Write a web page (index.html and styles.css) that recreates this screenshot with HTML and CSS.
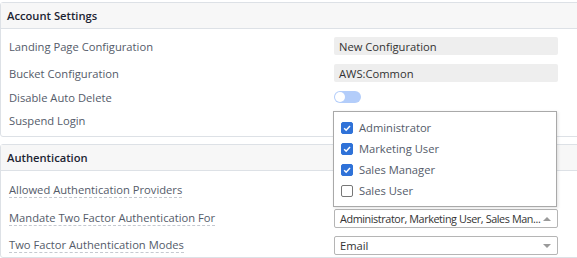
FILE: index.html
```html
<!DOCTYPE html>
<html>
<head>
<meta charset="utf-8">
<link rel="stylesheet" href="styles.css">
</head>
<body>
<div class="page">
  <section class="panel panel-account">
    <div class="panel-head">Account Settings</div>
    <div class="panel-body">
      <div class="row r1"><span class="label">Landing Page Configuration</span><div class="field ro">New Configuration</div></div>
      <div class="row r2"><span class="label">Bucket Configuration</span><div class="field ro">AWS:Common</div></div>
      <div class="row r3"><span class="label">Disable Auto Delete</span><div class="field-wrap"><span class="toggle"><span class="knob"></span></span></div></div>
      <div class="row r4"><span class="label">Suspend Login</span><div class="field-wrap"></div></div>
    </div>
  </section>
  <section class="panel panel-auth">
    <div class="panel-head">Authentication</div>
    <div class="panel-body">
      <div class="row a1"><span class="label dotted">Allowed Authentication Providers</span><div class="field-wrap"></div></div>
      <div class="row a2"><span class="label dotted">Mandate Two Factor Authentication For</span>
        <div class="field select"><span class="sel-text tight">Administrator, Marketing User, Sales Man...</span><span class="caret up"></span></div>
      </div>
      <div class="row a3"><span class="label dotted">Two Factor Authentication Modes</span>
        <div class="field select"><span class="sel-text">Email</span><span class="caret down"></span></div>
      </div>
    </div>
  </section>
  <div class="dropdown">
    <label class="opt"><span class="cb on"><svg viewBox="0 0 12 12"><path d="M2.6 6.2 L5 8.6 L9.6 3.6" fill="none" stroke="#fff" stroke-width="1.8"/></svg></span>Administrator</label>
    <label class="opt"><span class="cb on"><svg viewBox="0 0 12 12"><path d="M2.6 6.2 L5 8.6 L9.6 3.6" fill="none" stroke="#fff" stroke-width="1.8"/></svg></span>Marketing User</label>
    <label class="opt"><span class="cb on"><svg viewBox="0 0 12 12"><path d="M2.6 6.2 L5 8.6 L9.6 3.6" fill="none" stroke="#fff" stroke-width="1.8"/></svg></span>Sales Manager</label>
    <label class="opt"><span class="cb"></span>Sales User</label>
  </div>
</div>
</body>
</html>
```

FILE: styles.css
```css
* { box-sizing: border-box; }
html, body { margin: 0; padding: 0; background: #fff; }
body {
  font-family: "Open Sans", "Noto Sans", sans-serif;
  font-size: 11.2px;
  color: #545b69;
  overflow: hidden;
}
.page {
  position: relative;
  width: 577px;
  height: 258px;
  padding-top: 2px;
  overflow: hidden;
}
.panel {
  width: 600px;
  border: 1px solid #dde1e6;
  border-radius: 3px;
  background: #fff;
}
.panel-account { height: 135px; }
.panel-auth { margin-top: 7px; height: 114px; }
.panel-head {
  height: 26px;
  background: #f7f7f7;
  border-bottom: 1px solid #dde1e6;
  padding: 0 6px;
  font-size: 11.2px;
  font-weight: 600;
  color: #1d2433;
  display: flex;
  align-items: center;
}
.panel-body { padding-left: 8px; }
.row {
  display: flex;
  align-items: center;
  justify-content: space-between;
  width: 549px;
}
.label { white-space: nowrap; }
.dotted { border-bottom: 1px dashed #c5c9d0; line-height: 14px; }
.field, .field-wrap { width: 224px; flex: none; }
.r1 { margin-top: 8px; height: 18px; }
.r2 { margin-top: 9px; height: 18px; }
.r3 { margin-top: 7px; height: 16px; }
.r4 { margin-top: 7px; height: 16px; }
.a1 { margin-top: 10px; height: 18px; }
.a2 { margin-top: 10px; height: 19px; }
.a3 { margin-top: 8px; height: 19px; }
.field.ro {
  height: 18px;
  background: #eeeeee;
  border-radius: 2px;
  padding-left: 5px;
  display: flex;
  align-items: center;
  color: #333;
}
.toggle {
  display: block;
  width: 27px;
  height: 12px;
  border-radius: 6px;
  background: #b3cdfa;
  position: relative;
}
.knob {
  position: absolute;
  left: 1px; top: 1px;
  width: 10px; height: 10px;
  border-radius: 50%;
  background: #fff;
}
.field.select {
  height: 19px;
  border: 1px solid #b5b5b5;
  border-radius: 2px;
  padding: 0 6px 0 5px;
  display: flex;
  align-items: center;
  justify-content: space-between;
  color: #333;
}
.sel-text { white-space: nowrap; }
.sel-text.tight { font-size: 10.8px; letter-spacing: -0.4px; }
.caret { flex: none; width: 0; height: 0; border-left: 4px solid transparent; border-right: 4px solid transparent; }
.caret.up { border-bottom: 4px solid #9a9a9a; }
.caret.down { border-top: 4px solid #9a9a9a; }
.dropdown {
  position: absolute;
  left: 333px;
  top: 111px;
  width: 224px;
  height: 96px;
  background: #fff;
  border: 1px solid #a9a9a9;
  box-shadow: 1px 1px 3px rgba(0,0,0,0.12);
  padding-top: 5px;
  padding-left: 7px;
}
.opt {
  display: flex;
  align-items: center;
  height: 21px;
  color: #545b69;
}
.cb {
  width: 12px; height: 12px;
  border-radius: 2px;
  border: 1px solid #777;
  margin-right: 6px;
  background: #fff;
  display: flex;
}
.cb.on { background: #2f72d8; border-color: #2f72d8; }
.cb svg { width: 100%; height: 100%; }
```
